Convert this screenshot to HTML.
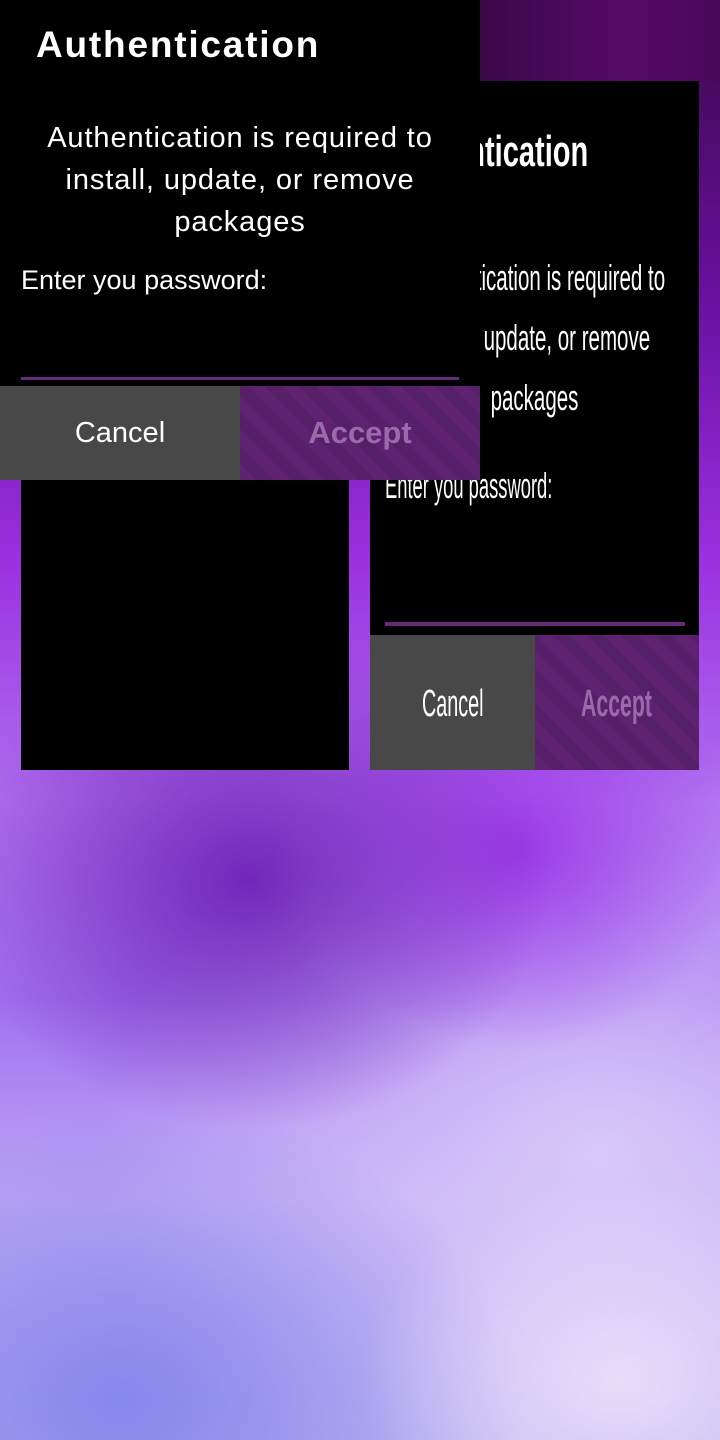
<!DOCTYPE html>
<html><head><meta charset="utf-8"><style>
html,body{margin:0;padding:0}
body{width:720px;height:1440px;position:relative;overflow:hidden;font-family:"Liberation Sans",sans-serif;
background:
radial-gradient(ellipse 260px 200px at 620px 1380px,rgba(235,225,250,.9),transparent),
radial-gradient(ellipse 400px 300px at 120px 1400px,rgba(130,130,235,.9),transparent),
radial-gradient(ellipse 300px 250px at 250px 880px,rgba(100,20,170,.8),transparent),
radial-gradient(ellipse 220px 200px at 520px 850px,rgba(150,40,230,.8),transparent),
radial-gradient(ellipse 500px 400px at 600px 1150px,rgba(220,205,250,.9),transparent),
linear-gradient(180deg,#3a0848 0px,#6a10a0 300px,#9a30e0 560px,#b070f0 800px,#a070f0 1000px,#c0a8f5 1200px,#b8b0f0 1440px);}
.stripe{background:repeating-linear-gradient(45deg,#5e2270 0 12px,#562068 12px 24px);}
.rd{position:absolute;left:370px;top:81px;width:329px;height:689px;background:#000;overflow:hidden}
.sq{position:absolute;white-space:nowrap;color:#fff;transform-origin:0 0}
.c{left:0;width:329px;text-align:center;transform-origin:50% 0}
.top{position:absolute;left:0;top:0;width:480px;height:480px;background:#000;color:#fff}
</style></head><body>
<div style="position:absolute;left:480px;top:0;width:240px;height:81px;background:linear-gradient(90deg,#3a0848,#560a6a 60%,#4a0858)"></div>
<div style="position:absolute;left:21px;top:470px;width:328px;height:300px;background:#000"></div>
<div class="rd">
 <div class="sq" style="left:15px;top:46px;font-size:44px;font-weight:bold;transform:scaleX(.66)">Authentication</div>
 <div class="sq c" style="top:176px;font-size:36px;transform:translateX(-30px) scaleX(.57)">Authentication is required to</div>
 <div class="sq c" style="top:236px;font-size:36px;transform:translateX(-21px) scaleX(.57)">install, update, or remove</div>
 <div class="sq c" style="top:296px;font-size:36px;transform:scaleX(.57)">packages</div>
 <div class="sq" style="left:15px;top:384px;font-size:36px;transform:scaleX(.51)">Enter you password:</div>
 <div style="position:absolute;left:15px;top:541px;width:300px;height:4px;background:#6a2a7a"></div>
 <div style="position:absolute;left:0;top:554px;width:165px;height:135px;background:#484848"></div>
 <div class="stripe" style="position:absolute;left:165px;top:554px;width:164px;height:135px"></div>
 <div class="sq" style="left:52px;top:602px;font-size:38px;transform:scaleX(.52)">Cancel</div>
 <div class="sq" style="left:211px;top:602px;font-size:38px;font-weight:bold;color:#9a6aaa;transform:scaleX(.56)">Accept</div>
</div>
<div class="top">
 <div style="position:absolute;left:36px;top:24px;font-size:37px;font-weight:bold;letter-spacing:1.8px">Authentication</div>
 <div style="position:absolute;left:0;width:480px;top:117px;font-size:29px;letter-spacing:.9px;line-height:42px;text-align:center">Authentication is required to<br>install, update, or remove<br>packages</div>
 <div style="position:absolute;left:21px;top:265px;font-size:27px">Enter you password:</div>
 <div style="position:absolute;left:21px;top:377px;width:438px;height:3px;background:#6a2a7a"></div>
 <div style="position:absolute;left:0;top:386px;width:240px;height:94px;background:#484848;font-size:29px;text-align:center;line-height:94px">Cancel</div>
 <div class="stripe" style="position:absolute;left:240px;top:386px;width:240px;height:94px;font-size:31px;font-weight:bold;color:#9a6aaa;text-align:center;line-height:94px">Accept</div>
</div>
</body></html>
